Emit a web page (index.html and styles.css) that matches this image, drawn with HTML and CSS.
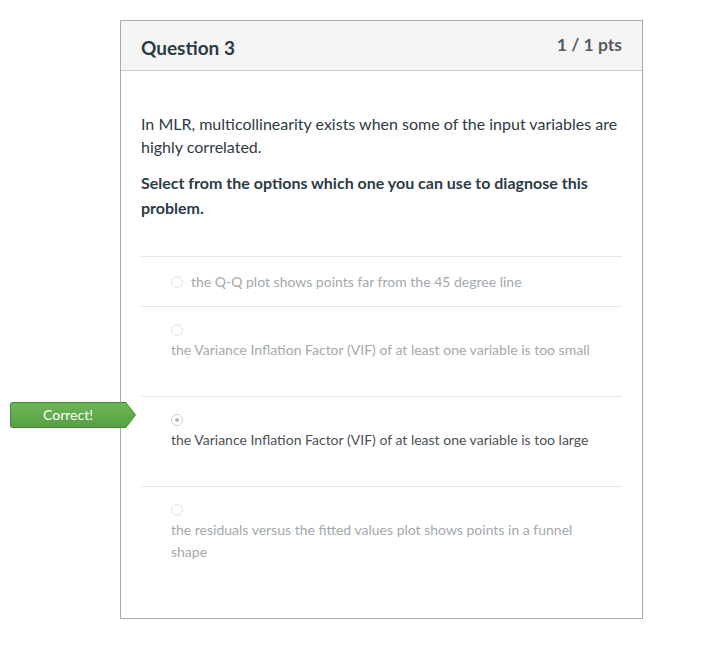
FILE: index.html
```html
<!DOCTYPE html>
<html lang="en">
<head>
<meta charset="utf-8">
<title>Question 3</title>
<link rel="stylesheet" href="styles.css">
</head>
<body>
<div class="question">
  <div class="q-header">
    <span class="q-title">Question 3</span>
    <span class="q-pts">1 / 1 pts</span>
  </div>
  <div class="q-body">
    <p class="q-text">In MLR, multicollinearity exists when some of the input variables are highly correlated.</p>
    <p class="q-text q-strong">Select from the options which one you can use to diagnose this problem.</p>
    <div class="answers">
      <div class="answer answer-inline">
        <span class="radio"></span><span class="a-text">the Q-Q plot shows points far from the 45 degree line</span>
      </div>
      <div class="answer">
        <div class="radio-row"><span class="radio"></span></div>
        <div class="a-text">the Variance Inflation Factor (VIF) of at least one variable is too small</div>
      </div>
      <div class="answer answer-selected">
        <div class="correct-flag"><div class="flag-inner">Correct!</div></div>
        <div class="radio-row"><span class="radio radio-on"></span></div>
        <div class="a-text">the Variance Inflation Factor (VIF) of at least one variable is too large</div>
      </div>
      <div class="answer">
        <div class="radio-row"><span class="radio"></span></div>
        <div class="a-text">the residuals versus the fitted values plot shows points in a funnel shape</div>
      </div>
    </div>
  </div>
</div>
</body>
</html>
```
FILE: styles.css
```css
html, body {
  margin: 0;
  padding: 0;
  background: #ffffff;
}
body {
  font-family: Lato, "Open Sans", "Liberation Sans", sans-serif;
  color: #2d3b45;
  padding: 20px 0 0 120px;
}
.question {
  width: 521px;
  border: 1px solid #aaaaaa;
  background: #fff;
}
.q-header {
  height: 49px;
  background: #f5f5f5;
  border-bottom: 1px solid #c7cdd1;
  display: flex;
  justify-content: space-between;
  padding: 0 20px;
}
.q-title {
  font-size: 19px;
  font-weight: 700;
  line-height: 22px;
  padding-top: 16px;
  color: #2d3b45;
}
.q-pts {
  font-size: 17.5px;
  font-weight: 700;
  line-height: 20px;
  padding-top: 14px;
  color: #555a5f;
}
.q-body {
  padding: 41px 20px 20px;
}
.q-text {
  margin: 0;
  font-size: 16px;
  line-height: 23px;
  color: #2d3b45;
}
.q-strong {
  font-weight: 700;
  line-height: 25px;
  margin-top: 12px;
}
.answers {
  margin-top: 36px;
}
.answer {
  position: relative;
  border-top: 1px solid #e6e6e6;
  padding: 14px 20px 35px 30px;
  font-size: 14px;
  color: #a4a9ad;
}
.answer-inline {
  padding-bottom: 13px;
  display: flex;
  align-items: center;
}
.answer-inline .radio {
  margin-right: 8px;
}
.a-text {
  line-height: 22px;
}
.radio-row {
  height: 18px;
  display: flex;
  align-items: center;
}
.radio {
  display: inline-block;
  box-sizing: border-box;
  width: 12px;
  height: 12px;
  border: 1px solid #e3e3e3;
  border-radius: 50%;
  background: #fff;
  flex: none;
}
.radio-on {
  border-color: #cfcfcf;
  position: relative;
}
.radio-on::after {
  content: "";
  position: absolute;
  left: 3px;
  top: 3px;
  width: 4px;
  height: 4px;
  border-radius: 50%;
  background: #b5b5b5;
}
.answer-selected .a-text {
  color: #4b5257;
}
.correct-flag {
  position: absolute;
  left: -131px;
  top: 5px;
  width: 126px;
  height: 26px;
  background: #3f8a30;
  clip-path: polygon(0 0, 116px 0, 126px 13px, 116px 26px, 0 26px);
  border-radius: 3px 0 0 3px;
}
.flag-inner {
  position: absolute;
  left: 1px;
  top: 1px;
  width: 124px;
  height: 24px;
  box-sizing: border-box;
  background: linear-gradient(#6db657, #55a141);
  clip-path: polygon(0 0, 115px 0, 124px 12px, 115px 24px, 0 24px);
  border-radius: 2px 0 0 2px;
  color: #ffffff;
  font-size: 14px;
  line-height: 24px;
  padding-right: 10px;
  text-align: center;
}
```
